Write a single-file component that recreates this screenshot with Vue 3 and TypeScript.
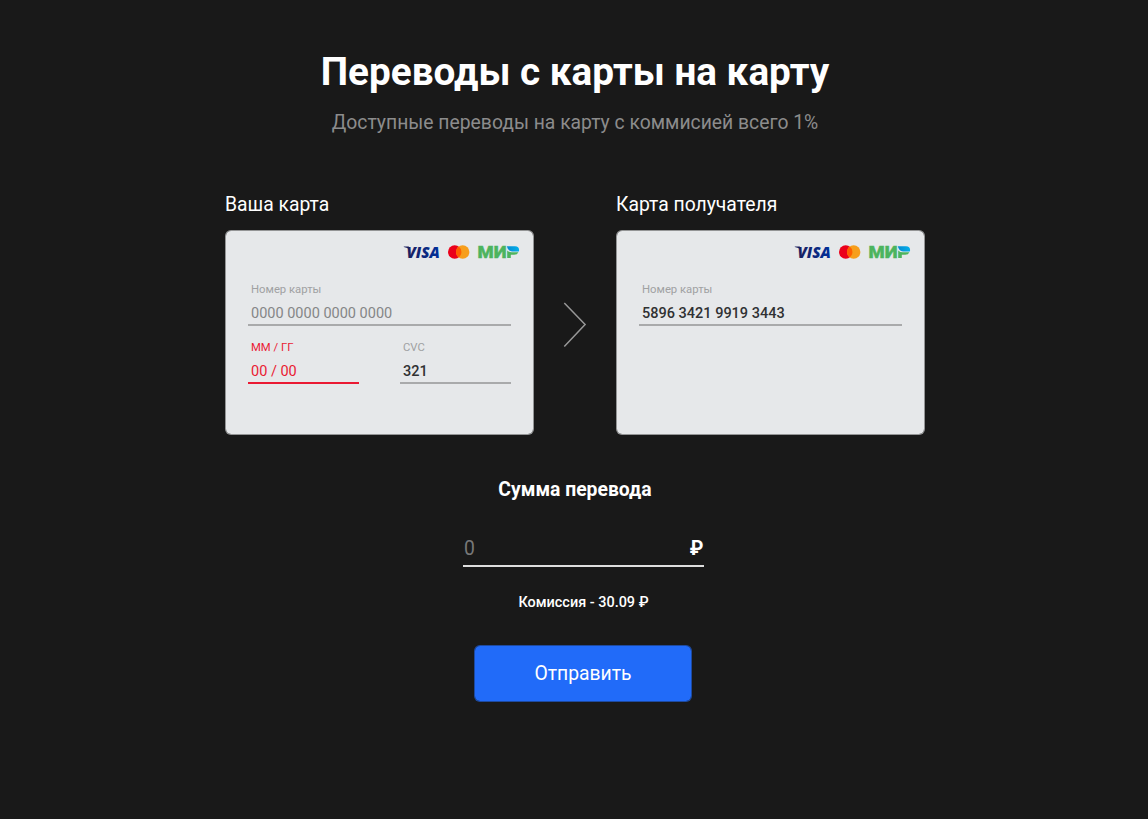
<script setup lang="ts">
import { ref } from 'vue'

interface Field {
  label: string
  value: string
  state: 'empty' | 'filled' | 'error'
  wide?: boolean
}

interface BankCard {
  title: string
  fields: Field[]
}

const cards: BankCard[] = [
  {
    title: 'Ваша карта',
    fields: [
      { label: 'Номер карты', value: '0000 0000 0000 0000', state: 'empty', wide: true },
      { label: 'ММ / ГГ', value: '00 / 00', state: 'error' },
      { label: 'CVC', value: '321', state: 'filled' },
    ],
  },
  {
    title: 'Карта получателя',
    fields: [{ label: 'Номер карты', value: '5896 3421 9919 3443', state: 'filled', wide: true }],
  },
]

const amount = ref('0')
const fee = ref('30.09')
</script>

<template>
  <main class="page">
    <h1 class="title">Переводы с карты на карту</h1>
    <p class="subtitle">Доступные переводы на карту с коммисией всего 1%</p>

    <div class="cards">
      <template v-for="(card, index) in cards" :key="card.title">
        <svg v-if="index > 0" class="arrow" width="24" height="46" viewBox="0 0 24 46">
          <path d="M1.3 1 L22.1 22.5 L1.3 44.4" fill="none" stroke="#979797" stroke-width="1.5" />
        </svg>
        <section class="column">
          <h2 class="card-title">{{ card.title }}</h2>
          <div class="card">
            <svg class="brands" width="118" height="26" viewBox="0 -5 118 26">
              <defs>
                <linearGradient id="visa" x1="0" x2="1" y1="0" y2="0">
                  <stop offset="0" stop-color="#1c1f5c" />
                  <stop offset="1" stop-color="#00309c" />
                </linearGradient>
                <linearGradient id="wing" x1="0" x2="1" y1="0" y2="0">
                  <stop offset="0" stop-color="#078bd2" />
                  <stop offset="1" stop-color="#05b0ea" />
                </linearGradient>
              </defs>
              <path d="M1.8 2.5 H6.8 L8 6 Q5.4 3.3 1.8 2.9 Z" fill="#1c1f5c" />
              <text class="visa" x="4.4" y="14" textLength="33.4" lengthAdjust="spacingAndGlyphs" fill="url(#visa)">VISA</text>
              <circle cx="52.7" cy="8" r="6.7" fill="#eb001b" />
              <circle cx="60.7" cy="8" r="6.7" fill="#f79e1b" />
              <path d="M56.7 2.6 A6.7 6.7 0 0 1 56.7 13.4 A6.7 6.7 0 0 1 56.7 2.6 Z" fill="#ff5f00" />
              <text class="mir" x="75.6" y="14" textLength="29" lengthAdjust="spacingAndGlyphs">МИ</text>
              <path d="M104.8 2.2 H113 Q117.1 2.2 117.1 6 Q117.1 6.8 116.8 7.5 H110 Q105.9 7.2 104.8 2.2 Z" fill="url(#wing)" />
              <path d="M105.2 6.4 Q107 8.2 109.8 8.3 H116.4 Q115.4 10.8 112.2 10.8 H108.8 V14 H105.2 Z" fill="#4db45e" />
            </svg>
            <div class="fields">
              <div
                v-for="field in card.fields"
                :key="field.label"
                :class="['field', field.state, { wide: field.wide }]"
              >
                <span class="label">{{ field.label }}</span>
                <span class="value">{{ field.value }}</span>
              </div>
            </div>
          </div>
        </section>
      </template>
    </div>

    <h2 class="sum-title">Сумма перевода</h2>
    <form class="transfer" @submit.prevent>
      <div class="amount">
        <span class="amount-value">{{ amount }}</span>
        <span class="currency">₽</span>
      </div>
      <p class="fee">Комиссия - {{ fee }} ₽</p>
      <button class="send" type="submit">Отправить</button>
    </form>
  </main>
</template>

<style>
body {
  margin: 0;
  background: #191919;
}
</style>

<style scoped>
.page {
  box-sizing: border-box;
  width: 1148px;
  height: 819px;
  padding: 47px 0 0 2px;
  display: flex;
  flex-direction: column;
  align-items: center;
  background: #191919;
  color: #fff;
  font-family: Roboto, "Liberation Sans", sans-serif;
}

h1,
h2,
p {
  margin: 0;
  white-space: nowrap;
}

.title {
  font-size: 38.7px;
  line-height: 50px;
  font-weight: 700;
}

.subtitle {
  margin-top: 14px;
  font-size: 19.33px;
  line-height: 24px;
  color: #8c8c8c;
}

.cards {
  display: flex;
  margin-top: 58px;
}

.column {
  width: 309px;
}

.arrow {
  margin: 109px 29px 0;
}

.card-title {
  font-size: 19.33px;
  line-height: 24px;
  font-weight: 400;
}

.card {
  box-sizing: border-box;
  height: 205px;
  margin-top: 13px;
  padding: 8px 22px 0;
  display: flex;
  flex-direction: column;
  border: 1px solid rgba(230, 232, 234, 0.6);
  border-radius: 6px;
  background: #e6e8ea;
  background-clip: padding-box;
}

.brands {
  align-self: flex-end;
  margin-right: -9px;
  flex: none;
}

.fields {
  display: grid;
  grid-template-columns: 111px 111px;
  justify-content: space-between;
  row-gap: 12px;
  margin-top: 15px;
}

.field {
  box-sizing: border-box;
  height: 46px;
  padding: 3px 3px 0;
  display: flex;
  flex-direction: column;
  border-bottom: 2px solid #a9aaab;
  color: #303133;
}

.wide {
  grid-column: 1 / -1;
}

.label {
  font-size: 11.3px;
  line-height: 14px;
  color: #a0a1a2;
}

.value {
  margin-top: 8px;
  font-size: 14.5px;
  line-height: 18px;
  font-weight: 500;
}

.empty .value {
  font-weight: 400;
  color: #858687;
}

.error {
  border-bottom: 2px solid #ea1a33;
}

.error .label,
.error .value {
  font-weight: 400;
  color: #ea1a33;
}

.visa {
  font: italic 800 16px "Open Sans", sans-serif;
}

.mir {
  font: 900 16.5px Roboto, sans-serif;
  fill: #4db45e;
  stroke: #4db45e;
  stroke-width: 0.4px;
}

.sum-title {
  margin-top: 43px;
  font-size: 19.33px;
  line-height: 24px;
  font-weight: 700;
}

.transfer {
  display: flex;
  flex-direction: column;
  align-items: center;
  width: 241px;
  margin: 33px 0 0 17px;
}

.amount {
  box-sizing: border-box;
  width: 100%;
  height: 32px;
  padding: 2px 0.5px 0 1px;
  display: flex;
  justify-content: space-between;
  border-bottom: 2px solid #ddd;
  font-size: 19.33px;
  line-height: 24px;
}

.amount-value {
  color: #787878;
}

.currency {
  font-weight: 700;
}

.fee {
  margin-top: 27px;
  font-size: 14.45px;
  line-height: 18px;
  font-weight: 500;
}

.send {
  box-sizing: border-box;
  width: 218px;
  height: 57px;
  margin: 33px 1px 0 0;
  padding: 0;
  border: 1px solid rgba(33, 107, 249, 0.6);
  border-radius: 6px;
  background: #216bf9;
  background-clip: padding-box;
  color: #fff;
  font: 400 19.33px/54px Roboto, "Liberation Sans", sans-serif;
}
</style>
